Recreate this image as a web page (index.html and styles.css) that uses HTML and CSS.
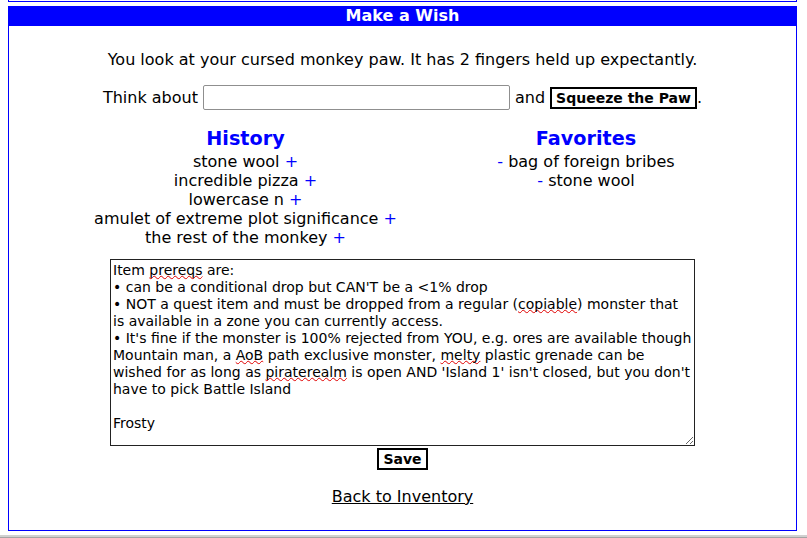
FILE: index.html
```html
<!DOCTYPE html>
<html lang="en">
<head>
<meta charset="utf-8">
<title>Make a Wish</title>
<link rel="stylesheet" href="styles.css">
</head>
<body>
<div class="page">
  <div class="prev-box"></div>
  <section class="panel">
    <div class="panel-title">Make a Wish</div>
    <div class="panel-body">
      <p class="intro">You look at your cursed monkey paw. It has 2 fingers held up expectantly.</p>
      <form class="wish-row">
        <span>Think about</span>
        <input class="wish-input" type="text">
        <span>and</span>
        <button class="btn" type="button">Squeeze the Paw</button><span class="dot">.</span>
      </form>
      <div class="lists">
        <div class="list">
          <h2 class="list-title">History</h2>
          <div class="item">stone wool <span class="act">+</span></div>
          <div class="item">incredible pizza <span class="act">+</span></div>
          <div class="item">lowercase n <span class="act">+</span></div>
          <div class="item">amulet of extreme plot significance <span class="act">+</span></div>
          <div class="item">the rest of the monkey <span class="act">+</span></div>
        </div>
        <div class="list">
          <h2 class="list-title">Favorites</h2>
          <div class="item"><span class="act">-</span> bag of foreign bribes</div>
          <div class="item"><span class="act">-</span> stone wool</div>
        </div>
      </div>
      <div class="notes" spellcheck="false">Item <span class="sp">prereqs</span> are:
• can be a conditional drop but CAN'T be a &lt;1% drop
• NOT a quest item and must be dropped from a regular (<span class="sp">copiable</span>) monster that is available in a zone you can currently access.
• It's fine if the monster is 100% rejected from YOU, e.g. ores are available though Mountain man, a <span class="sp">AoB</span> path exclusive monster, <span class="sp">melty</span> plastic grenade can be wished for as long as <span class="sp">piraterealm</span> is open AND 'Island 1' isn't closed, but you don't have to pick Battle Island

Frosty</div>
      <div class="save-row"><button class="btn" type="button">Save</button></div>
      <p class="back"><a href="#">Back to Inventory</a></p>
    </div>
  </section>
  <div class="bottom-bar"></div>
</div>
</body>
</html>
```
FILE: styles.css
```css
html, body {
  margin: 0;
  padding: 0;
  background: #fff;
}
body {
  font-family: "DejaVu Sans", "Noto Sans", sans-serif;
  font-size: 16px;
  color: #000;
  line-height: 19px;
}
.page {
  padding: 0 10px 0 8px;
  overflow: hidden;
  height: 538px;
}
.prev-box {
  height: 1px;
  border: 1px solid #0000ff;
  border-top: none;
}
.panel {
  margin-top: 4px;
}
.panel-title {
  background: #0000ff;
  color: #fff;
  font-weight: bold;
  text-align: center;
  height: 20px;
  line-height: 20px;
}
.panel-body {
  border: 1px solid #0000ff;
  border-top: none;
  padding: 24px 0 24px;
  text-align: center;
}
.intro {
  margin: 0;
  line-height: 19px;
}
.wish-row {
  margin: 16px 0 0;
  display: flex;
  justify-content: center;
  align-items: center;
  height: 25px;
}
.wish-input {
  box-sizing: border-box;
  width: 307px;
  height: 25px;
  margin: 0 5px;
  border: 1px solid #8f8f8f;
  border-radius: 2px;
  padding: 0 3px;
  font: 14px "DejaVu Sans", sans-serif;
}
.btn {
  font: bold 14px/16px "DejaVu Sans", sans-serif;
  color: #000;
  background: #fff;
  border: 2px solid #000;
  padding: 1px 4px 1px;
  border-radius: 0;
  height: 22px;
  box-sizing: border-box;
}
.wish-row .btn {
  margin-left: 5px;
}
.lists {
  display: grid;
  grid-template-columns: 303px 250px;
  column-gap: 64px;
  justify-content: center;
  margin-top: 18px;
  text-align: center;
}
.list-title {
  margin: 0 0 1.5px;
  font-size: 19.2px;
  line-height: 22px;
  font-weight: bold;
  color: #0000ff;
}
.item {
  white-space: nowrap;
  line-height: 19px;
}
.act {
  color: #0000ff;
}
.notes {
  box-sizing: border-box;
  width: 585px;
  height: 187px;
  margin: 12px auto 0;
  border: 1px solid #222;
  padding: 2px 2px;
  text-align: left;
  white-space: pre-wrap;
  font-size: 14px;
  line-height: 17px;
  overflow: auto;
  resize: both;
}
.sp {
  text-decoration: underline wavy #e00000;
  text-decoration-skip-ink: none;
  text-underline-offset: 0px;
  text-decoration-thickness: 1px;
}
.save-row {
  margin-top: 2px;
  height: 22px;
}
.back {
  margin: 17px 0 0;
  line-height: 19px;
}
.back a {
  color: #000;
  text-decoration: underline;
}
.bottom-bar {
  margin: 4px -10px 0 -8px;
  height: 6px;
  border-top: 2px solid #d0d0d0;
  background: #a4a4a4;
}
```
